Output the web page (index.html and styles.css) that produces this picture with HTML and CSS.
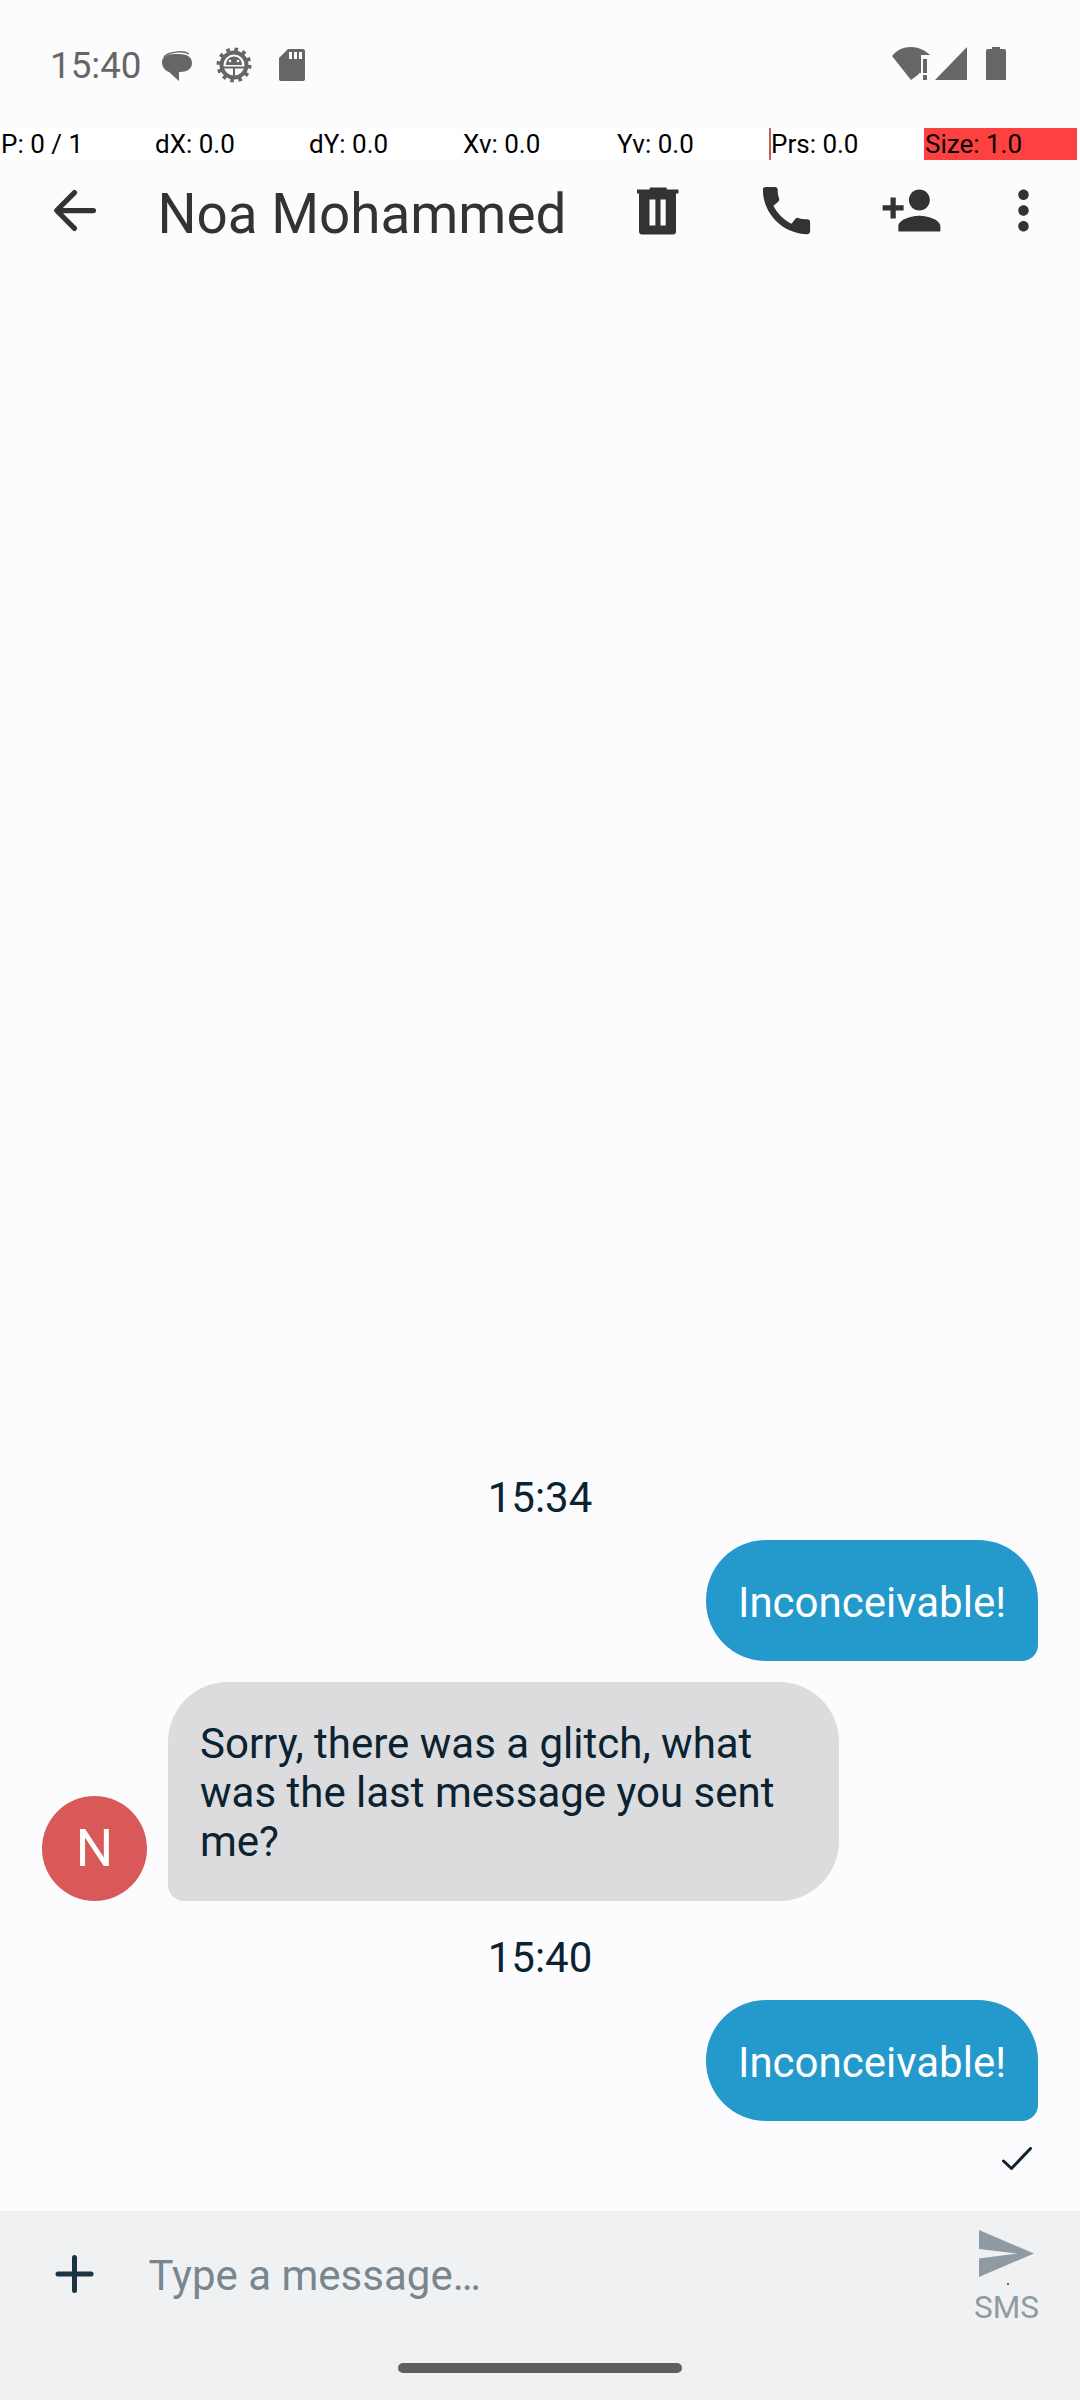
FILE: index.html
```html
<!DOCTYPE html>
<html lang="en">
<head>
    <meta charset="UTF-8">
    <meta name="viewport" content="width=device-width, initial-scale=1.0">
    <title>Noa Mohammed</title>
    <link rel="stylesheet" href="styles.css">
</head>
<body>
    <div class="phone">
        <!-- status bar -->
        <div class="status-bar">
            <span class="status-time">15:40</span>
            <svg class="st-chat" viewBox="0 0 31 30"><path d="M3 6C7 1 22 -1 28 3" fill="none" stroke="#666" stroke-width="1.500"/><path d="M1 11C1 6 6 3 14 3h4c8 0 13 3 13 9s-5 9-12 9h-1v9L8 21C3 19 1 15 1 11z" fill="#666"/></svg>
            <svg class="st-gear" viewBox="0 0 36 36">
                <circle cx="18" cy="18" r="12.500" fill="#fcfcff" stroke="#666" stroke-width="4"/>
                <circle cx="18" cy="18" r="15.500" fill="none" stroke="#666" stroke-width="4" stroke-dasharray="3.600 4.510"/>
                <path d="M8 19.500h20v2H8zM17 21h2v9h-2zM10 18c0-5 3.500-8.500 8-8.500s8 3.500 8 8.500z" fill="#666"/>
                <circle cx="14" cy="14" r="1.300" fill="#fcfcff"/><circle cx="22" cy="14" r="1.300" fill="#fcfcff"/>
            </svg>
            <svg class="st-sd" viewBox="0 0 26 32"><path d="M9 0h15a2 2 0 0 1 2 2v28a2 2 0 0 1-2 2H2a2 2 0 0 1-2-2V9z" fill="#666"/><path d="M10 3h3v7h-3zM15 3h3v7h-3zM20 3h3v7h-3z" fill="#fcfcff"/></svg>
            <span class="status-spacer"></span>
            <svg class="st-wifi" viewBox="0 0 38 33"><path d="M0 9C5 3 11 0 19 0c7 0 14 3 19 8h-9v18l-2 0v1l-8 6z" fill="#666"/><path d="M31 12h4v14h-4zM31 28h4v5h-4z" fill="#666"/></svg>
            <svg class="st-signal" viewBox="0 0 32 33"><path d="M32 0v33H0z" fill="#666"/></svg>
            <svg class="st-battery" viewBox="0 0 20 33"><path d="M6 0h8v2h4a2 2 0 0 1 2 2v29H0V4a2 2 0 0 1 2-2h4z" fill="#666"/></svg>
        </div>

        <!-- pointer location overlay -->
        <div class="pointer-strip">
            <span class="cell">P: 0 / 1</span>
            <span class="cell">dX: 0.0</span>
            <span class="cell">dY: 0.0</span>
            <span class="cell">Xv: 0.0</span>
            <span class="cell">Yv: 0.0</span>
            <span class="cell cell-prs">Prs: 0.0</span>
            <span class="cell cell-size">Size: 1.0</span>
        </div>

        <!-- toolbar -->
        <header class="toolbar">
            <svg class="icon back" viewBox="0 0 24 24"><path d="M19.200 12H5.400M12 5.200 5.200 12l6.800 6.800" fill="none" stroke="#333" stroke-width="2" stroke-linecap="round" stroke-linejoin="round"/></svg>
            <h1 class="title">Noa Mohammed</h1>
            <svg class="icon act-delete" viewBox="0 0 63 63"><path d="M11.500 10.500h12l.5-2h16.500l.5 2h11a.5.5 0 0 1 .5.500v3a.5.5 0 0 1-.5.500H11.500a.5.5 0 0 1-.5-.5v-3a.5.5 0 0 1 .5-.5zM13 14.500h37v38a3 3 0 0 1-3 3H16a3 3 0 0 1-3-3z" fill="#333"/><path d="M23.500 20.500h5.900v26h-5.900zM34.500 20.500h5.200v26h-5.200z" fill="#fcfcff"/></svg>
            <svg class="icon act-call" viewBox="0 0 24 24"><path d="M20.010 15.380c-1.230 0-2.420-.2-3.530-.56-.35-.12-.74-.03-1.010.24l-1.570 1.970c-2.830-1.350-5.480-3.900-6.890-6.830l1.950-1.660c.27-.28.35-.67.24-1.020-.37-1.110-.56-2.300-.56-3.530 0-.54-.45-.99-.99-.99H4.190C3.650 3 3 3.240 3 3.990 3 13.280 10.730 21 20.010 21c.71 0 .99-.63.99-1.180v-3.450c0-.54-.45-.99-.99-.99z" fill="#333"/></svg>
            <svg class="icon act-person" viewBox="0 0 24 24"><path d="M15 12c2.210 0 4-1.790 4-4s-1.790-4-4-4-4 1.790-4 4 1.790 4 4 4zm-9-2V7H4v3H1v2h3v3h2v-3h3v-2H6zm9 4c-2.670 0-8 1.340-8 4v2h16v-2c0-2.660-5.330-4-8-4z" fill="#333"/></svg>
            <svg class="icon act-more" viewBox="0 0 24 24"><path d="M12 8c1.100 0 2-.9 2-2s-.9-2-2-2-2 .9-2 2 .9 2 2 2zm0 2c-1.100 0-2 .9-2 2s.9 2 2 2 2-.9 2-2-.9-2-2-2zm0 6c-1.100 0-2 .9-2 2s.9 2 2 2 2-.9 2-2-.9-2-2-2z" fill="#333"/></svg>
        </header>

        <!-- conversation -->
        <main class="thread">
            <div class="stamp">15:34</div>
            <div class="msg msg-out"><div class="bubble bubble-out">Inconceivable!</div></div>
            <div class="msg msg-in">
                <div class="avatar">N</div>
                <div class="bubble bubble-in">Sorry, there was a glitch, what was the last message you sent me?</div>
            </div>
            <div class="stamp stamp-second">15:40</div>
            <div class="msg msg-out"><div class="bubble bubble-out">Inconceivable!</div></div>
            <div class="delivered">
                <svg class="check" viewBox="0 0 30 23"><path d="M1.500 14 9.500 21.500 28.500 1.500" fill="none" stroke="#0f2230" stroke-width="3" stroke-linecap="round" stroke-linejoin="round"/></svg>
            </div>
        </main>

        <!-- composer -->
        <footer class="composer">
            <div class="composer-row">
                <svg class="icon attach" viewBox="0 0 63 63"><path d="M31.500 14.500v33M15 31h33" fill="none" stroke="#1c3341" stroke-width="5" stroke-linecap="round"/></svg>
                <span class="placeholder">Type a message…</span>
                <div class="send">
                    <svg class="send-icon" viewBox="0 0 55 47"><path d="M0 0 55 23.500 0 47V28.500L38 23.500 0 19z" fill="#8f9ba3"/></svg>
                    <span class="send-label">SMS</span>
                    <span class="touch-dot"></span>
                </div>
            </div>
            <div class="nav-handle"></div>
        </footer>
    </div>
</body>
</html>
```

FILE: styles.css
```css
:root {
    --page-bg: #fcfcff;
    --ink: #0b2230;
    --icon-dark: #333333;
    --muted: #8f9ba3;
}

* {
    box-sizing: border-box;
}

html, body {
    margin: 0;
    padding: 0;
}

body {
    font-family: Roboto, "Liberation Sans", sans-serif;
    background-color: var(--page-bg);
    color: var(--ink);
}

.phone {
    width: 1080px;
    height: 2400px;
    display: flex;
    flex-direction: column;
    overflow: hidden;
}

/* status bar */
.status-bar {
    height: 128px;
    flex-shrink: 0;
    display: flex;
    align-items: flex-start;
    padding: 47px 74px 0 50px;
    color: #666666;
}

.status-time {
    font-size: 36.75px;
    line-height: 36px;
    margin-top: 1px;
}

.status-spacer { flex: 1; }

.st-chat { width: 31px; height: 30px; margin: 4px 0 0 19px; }
.st-gear { width: 36px; height: 36px; margin: 0 0 0 24px; }
.st-sd { width: 26px; height: 32px; margin: 2px 0 0 27px; }
.st-wifi { width: 38px; height: 33px; }
.st-signal { width: 32px; height: 33px; margin-left: 5px; }
.st-battery { width: 20px; height: 33px; margin-left: 19px; }

/* pointer strip */
.pointer-strip {
    height: 32px;
    flex-shrink: 0;
    display: grid;
    grid-template-columns: repeat(7, 154px);
    font-size: 26px;
    line-height: 32px;
    color: #000000;
}

.cell {
    background-color: #ffffff;
    margin-right: 1px;
    padding-left: 1px;
    white-space: nowrap;
}

.cell-prs {
    position: relative;
}

.cell-prs::before {
    content: "";
    position: absolute;
    left: -1px;
    top: 0;
    width: 1.5px;
    height: 32px;
    background-color: #c06060;
}

.cell-size {
    background-color: #ff4040;
}

/* toolbar */
.toolbar {
    height: 100px;
    flex-shrink: 0;
    display: flex;
    align-items: center;
    padding: 0 25.5px 0 42.5px;
}

.icon {
    width: 63px;
    height: 63px;
    flex-shrink: 0;
    display: block;
}

.title {
    flex: 1;
    margin: 8px 0 0 52px;
    font-size: 54.8px;
    font-weight: 400;
    color: var(--icon-dark);
    white-space: nowrap;
}

.act-call { margin-left: 65.5px; }
.act-person { margin-left: 62px; }
.act-more { margin-left: 49px; }

/* conversation */
.thread {
    flex: 1;
    display: flex;
    flex-direction: column;
    justify-content: flex-end;
    padding: 0 42px;
    font-size: 42px;
    line-height: 49px;
}

.stamp {
    text-align: center;
    height: 49px;
    margin-bottom: 20px;
    padding-top: 2px;
}

.stamp-second {
    margin-top: 30px;
}

.msg {
    display: flex;
    align-items: flex-end;
}

.msg-out {
    justify-content: flex-end;
}

.msg-in {
    margin-top: 21px;
}

.bubble {
    padding: 38px 32px 34px;
    white-space: pre-wrap;
}

.bubble-out {
    background-color: #239acb;
    color: #ffffff;
    border-radius: 60px 60px 16px 60px;
}

.bubble-in {
    width: 671px;
    margin-left: 21px;
    padding: 37px 32px 35px;
    background-color: #dcdcde;
    border-radius: 60px 60px 60px 16px;
}

.avatar {
    width: 105px;
    height: 105px;
    flex-shrink: 0;
    border-radius: 50%;
    background-color: #d95959;
    color: #ffffff;
    font-size: 52.5px;
    line-height: 105px;
    text-align: center;
}

.delivered {
    display: flex;
    justify-content: flex-end;
    height: 90px;
    padding: 26px 6px 0 0;
}

.check {
    width: 30px;
    height: 23px;
}

/* composer */
.composer {
    height: 189px;
    flex-shrink: 0;
    background-color: #f0f1f3;
    position: relative;
}

.composer-row {
    display: flex;
    align-items: flex-start;
    padding: 19px 41px 0 42.5px;
}

.attach {
    margin-top: 13px;
}

.placeholder {
    flex: 1;
    margin: 0 0 0 43px;
    padding-top: 21px;
    font-size: 42px;
    line-height: 49px;
    color: #78868f;
}

.send {
    display: flex;
    flex-direction: column;
    align-items: center;
    position: relative;
}

.send-icon {
    width: 55px;
    height: 47px;
}

.send-label {
    margin-top: 15px;
    font-size: 31.5px;
    line-height: 32px;
    color: var(--muted);
}

.touch-dot {
    position: absolute;
    left: 33px;
    top: 53px;
    width: 2px;
    height: 2px;
    background-color: #e53030;
}

.nav-handle {
    position: absolute;
    left: 398px;
    top: 152px;
    width: 284px;
    height: 10px;
    border-radius: 5px;
    background-color: #5f5f5f;
}
```
